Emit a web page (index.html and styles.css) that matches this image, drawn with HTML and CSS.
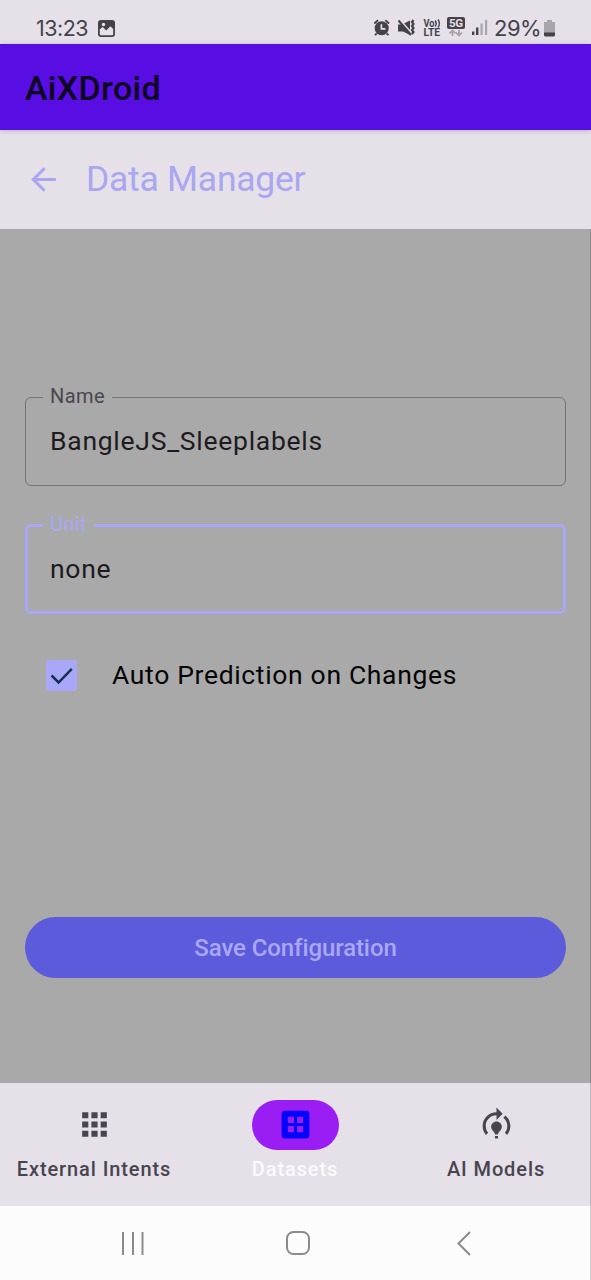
FILE: index.html
```html
<!DOCTYPE html>
<html lang="en">
<head>
<meta charset="utf-8">
<meta name="viewport" content="width=device-width">
<title>AiXDroid</title>
<link rel="stylesheet" href="styles.css">
</head>
<body>
<div class="screen">
  <div class="status-bar">
    <span class="clock">13:23</span>
    <svg class="photo-icon" viewBox="0 0 17 17" width="17" height="17"><rect width="17" height="17" rx="3" fill="#454249"/><path d="M1.800 9.200 4.800 7l3.400 3.500 4.200-4.200 2.800 2.700V14q0 1.200-1.200 1.200H3Q1.800 15.200 1.800 14z" fill="#e6e0e9"/><circle cx="5.500" cy="4.500" r="1.700" fill="#e6e0e9"/></svg>
    <svg class="status-icons" viewBox="0 0 116 24" width="116" height="24">
      <g fill="#454249">
        <circle cx="8.700" cy="12.300" r="7"/>
        <path d="m3.700 17.500-1.800 1.700M13.700 17.500l1.800 1.700M1.300 7.500l3.700-3.200M16.100 7.500l-3.700-3.200" stroke="#454249" stroke-width="1.800"/>
        <path d="M8.400 8.200v4.700h4" fill="none" stroke="#e6e0e9" stroke-width="1.700"/>
        <path d="M25 8.500h4L37 4.500v14.500L30 15.500h-5z"/>
        <path d="m26.800 3.500 13 15" stroke="#e6e0e9" stroke-width="1.800"/>
        <path d="m25.500 4.500 12.500 14.500" stroke="#454249" stroke-width="2"/>
        <path d="m40.500 4-1.500 2 1.500 2-1.500 2 1.500 2-1.500 2 1.500 2-1.500 2" fill="none" stroke="#454249" stroke-width="2.200"/>
        <text class="tiny" x="50.500" y="11" textLength="11" lengthAdjust="spacingAndGlyphs">Vo</text>
        <path d="M62.200 4.500q2 3 0 6M65 3.500q2.800 4 0 8" fill="none" stroke="#454249" stroke-width="1.400"/>
        <text class="tiny" x="50.500" y="20" textLength="16.500" lengthAdjust="spacingAndGlyphs">LTE</text>
        <rect x="74" y="1" width="18" height="12" rx="2"/>
        <text class="tiny net" x="76" y="11.200" textLength="14">5G</text>
        <path d="M79.500 20v-5.500m-3 3 3-3 3 3M86 14v5.500m-3-3 3 3 3-3" fill="none" stroke="#a49ea7" stroke-width="1.600"/>
        <rect x="99" y="15.500" width="2.400" height="3.500"/><rect x="103" y="11.500" width="2.400" height="7.500"/>
        <path d="M107.500 7.500h2.200V19h-2.200zM112 4h2.200v15H112z" fill="#aaa5ad"/>
      </g>
    </svg>
    <span class="percent">29%</span>
    <svg class="battery" viewBox="0 0 11 17" width="11" height="17"><path d="M3 0h5v2h3v12H0V2h3z" fill="#aaa5ad"/><path d="M0 12.500h11V15q0 1.500-1.500 1.500h-8Q0 16.500 0 15z" fill="#454249"/></svg>
  </div>
  <header class="app-bar"><h1 class="app-name">AiXDroid</h1></header>
  <div class="page-bar">
    <svg class="icon back" viewBox="0 0 24 24"><path d="M20 11H7.830l5.590-5.590L12 4l-8 8 8 8 1.410-1.410L7.830 13H20z"/></svg>
    <h2 class="page-title">Data Manager</h2>
  </div>
  <main class="content">
    <fieldset class="field"><legend class="label name-label"><span class="label-text">Name</span></legend><div class="value long">BangleJS_Sleeplabels</div></fieldset>
    <fieldset class="field focused"><legend class="label unit-label"><span class="label-text">Unit</span></legend><div class="value">none</div></fieldset>
    <div class="check-row">
      <svg class="checkbox" viewBox="0 0 31 31" width="31" height="31"><rect width="31" height="31" rx="3" fill="#a9a7f8"/><path d="m5.600 15.500 7 7L25.800 8.800" fill="none" stroke="#15304f" stroke-width="2.500"/></svg>
      <span class="check-label">Auto Prediction on Changes</span>
    </div>
    <div class="save"><span class="save-text">Save Configuration</span></div>
  </main>
  <nav class="tabs">
    <div class="tab first">
      <div class="pill"><svg class="icon" viewBox="0 0 24 24"><path d="M4 8h4V4H4zm6 12h4v-4h-4zm-6 0h4v-4H4zm0-6h4v-4H4zm6 0h4v-4h-4zm6-10v4h4V4zm-6 4h4V4h-4zm6 6h4v-4h-4zm0 6h4v-4h-4z"/></svg></div>
      <span class="tab-text">External Intents</span>
    </div>
    <div class="tab active">
      <div class="pill"><svg class="icon" viewBox="0 0 24 24"><path fill-rule="evenodd" d="M5 3h14q2 0 2 2v14q0 2-2 2H5q-2 0-2-2V5q0-2 2-2zm2 4v4h4V7zm6 0v4h4V7zm-6 6v4h4v-4zm6 0v4h4v-4z"/></svg></div>
      <span class="tab-text">Datasets</span>
    </div>
    <div class="tab last">
      <div class="pill"><svg class="icon" viewBox="0 0 24 24"><path d="M15.500 13.500c0 2-2.500 3.500-2.500 5h-2c0-1.500-2.500-3-2.500-5 0-1.930 1.570-3.500 3.500-3.500s3.500 1.570 3.500 3.500zm-2.500 6h-2V21h2zM19 13c0 1.680-.590 3.210-1.580 4.420l1.420 1.420a8.978 8.978 0 0 0-1-12.680l-1.420 1.420A6.993 6.993 0 0 1 19 13zm-3-8-4-4v3a9 9 0 0 0-9 9c0 2.230.820 4.270 2.160 5.840l1.420-1.420A6.938 6.938 0 0 1 5 13c0-3.860 3.140-7 7-7v3z"/></svg></div>
      <span class="tab-text">AI Models</span>
    </div>
  </nav>
  <div class="system-nav">
    <svg class="recents" viewBox="0 0 24 24" width="24" height="24"><path d="M2 1v23M12 1v23M21.500 1v23"/></svg>
    <svg class="home" viewBox="0 0 24 24" width="24" height="24"><rect x="1" y="1" width="22" height="22" rx="6.500"/></svg>
    <svg class="sys-back" viewBox="0 0 14 25" width="14" height="25"><path d="M13 1 1.500 12.500 13 24"/></svg>
  </div>
</div>
</body>
</html>
```
FILE: styles.css
```css
* { box-sizing: border-box; }
body { margin: 0; font-family: Roboto, sans-serif; }
h1, h2 { margin: 0; font-weight: 400; }
span, h1, h2 { white-space: nowrap; }
svg { flex: none; display: block; }

.screen {
  width: 591px;
  height: 1280px;
  display: flex;
  flex-direction: column;
  background: #a9a9a9;
  overflow: hidden;
}

.status-bar {
  height: 44px;
  flex: none;
  display: flex;
  align-items: flex-start;
  padding: 16px 0 0 36px;
  background: #e6e0e9;
  color: #454249;
  font-family: Inter, sans-serif;
}
.clock { width: 62px; font-size: 21.5px; line-height: 24px; letter-spacing: -0.5px; }
.photo-icon { margin-top: 4px; }
.status-icons { margin-left: 258px; }
.percent { margin-left: 5px; width: 50px; font-size: 22px; line-height: 24px; letter-spacing: -0.5px; }
.battery { margin-top: 4px; }
.tiny { font: 700 10px Roboto, sans-serif; fill: #454249; }
.net { font-size: 11.5px; fill: #e6e0e9; }

.app-bar {
  height: 86px;
  flex: none;
  display: flex;
  align-items: center;
  padding: 1px 0 0 25px;
  background: #580de3;
  box-shadow: 0 1px 5px rgba(60, 50, 90, 0.25);
  position: relative;
}
.app-name { font-size: 34px; line-height: 40px; font-weight: 500; letter-spacing: 0.3px; color: #0d0322; }

.page-bar {
  height: 99px;
  flex: none;
  display: flex;
  align-items: center;
  padding-left: 25px;
  gap: 24px;
  background: #e6e0e9;
  color: #a9a7f0;
}
.icon { width: 37px; height: 37px; fill: currentColor; }
.page-title { padding-bottom: 2px; font-size: 35.5px; line-height: 42px; letter-spacing: -0.25px; }

.content {
  height: 854px;
  flex: none;
  display: flex;
  flex-direction: column;
  padding: 156px 24px 0 25px;
  border-right: 1px solid #8b8b8b;
}
.field {
  height: 101px;
  min-width: 0;
  margin: 0 0 27px;
  padding: 0 0 0 17px;
  border: 1.5px solid #737276;
  border-radius: 6px;
  color: #1d1b20;
}
.focused { border: 3px solid #a9a7f8; padding-left: 15px; margin-bottom: 46px; }
.label { height: 24px; padding: 0 7px; color: #49464d; }
.label-text { display: block; font-size: 20px; line-height: 22px; letter-spacing: 0.4px; }
.focused .label { color: #a9a7f8; }
.value { padding: 16px 0 0 7px; font-size: 26.5px; line-height: 32px; letter-spacing: 0.73px; }
.check-row { display: flex; align-items: center; height: 31px; padding-left: 21px; gap: 35px; }
.check-label { padding-bottom: 2px; font-size: 26.5px; line-height: 31px; letter-spacing: 0.66px; color: #050505; }
.save {
  height: 61px;
  margin-top: 226px;
  display: flex;
  align-items: center;
  justify-content: center;
  border-radius: 31px;
  background: #5b5bdb;
  color: #aaa8f6;
}
.save-text { font-size: 24px; font-weight: 500; line-height: 30px; letter-spacing: -0.1px; font-variant-ligatures: common-ligatures; }

.tabs {
  height: 123px;
  flex: none;
  display: grid;
  grid-template-columns: 188px 214px 188px;
  padding-top: 17px;
  background: #e6e0e9;
  border-right: 1px solid #bdb8c1;
}
.tab { display: flex; flex-direction: column; align-items: center; gap: 7px; color: #49454f; }
.pill { width: 87px; height: 50px; padding-bottom: 1px; display: flex; align-items: center; justify-content: center; border-radius: 25px; }
.active .pill { background: #9a1df4; color: #0505fa; }
.active { color: #fcf9fd; }
.tab-text { font-size: 20px; font-weight: 500; line-height: 24px; letter-spacing: 0.9px; }

.system-nav {
  flex: 1;
  display: flex;
  padding: 25px 0 0 121px;
  background: #fcfcfc;
  border-right: 1px solid #cccccc;
}
.system-nav svg { fill: none; stroke: #8b8b8b; stroke-width: 2; }
.home { margin-left: 141px; }
.sys-back { margin-left: 147px; }
```
